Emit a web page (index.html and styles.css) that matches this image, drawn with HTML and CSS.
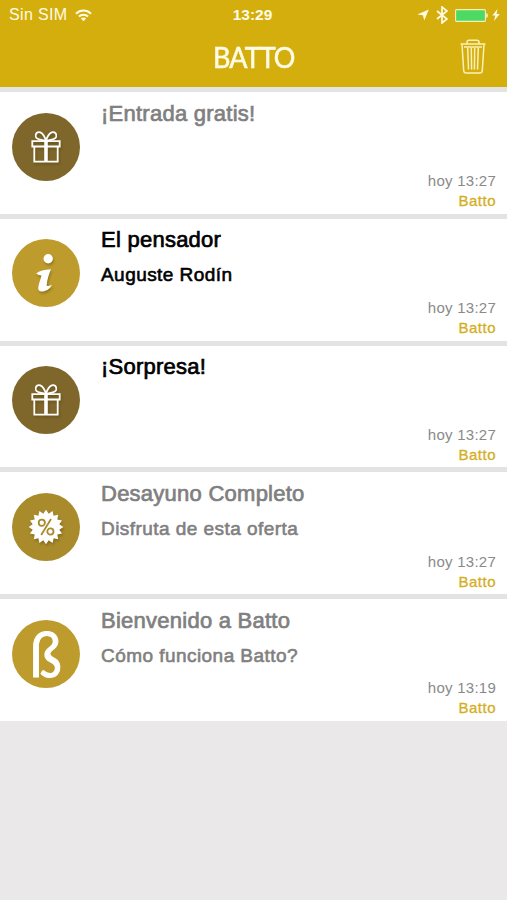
FILE: index.html
```html
<!DOCTYPE html>
<html lang="es">
<head>
    <meta charset="UTF-8">
    <meta name="viewport" content="width=device-width, initial-scale=1.0">
    <title>Batto</title>
    <link rel="stylesheet" href="styles.css">
</head>
<body>
    <!-- Shared icon for the gift messages -->
    <svg class="sprite" width="0" height="0">
        <symbol id="gift" viewBox="0 0 30 34">
            <g fill="none" stroke="#fff" stroke-width="1.8">
                <path d="M1.3 11.2h27.4v5.300H1.3z"/>
                <path d="M3.3 16.500v15.200h23.4V16.500"/>
                <path d="M15 10.800C12 9.600 6 10.400 4.800 6.700 3.900 3.700 6.500 1.300 9.300 2.300c3.300 1.400 4.800 5.300 5.700 8.500zM15 10.800c3-1.200 9-.4 10.200-4.100.9-3-1.700-5.400-4.500-4.400-3.300 1.400-4.800 5.300-5.700 8.500z"/>
                <path d="M15 11v20.500" stroke-width="3.6"/>
            </g>
        </symbol>
    </svg>

    <header class="header">
        <div class="status-bar">
            <div class="status-left">
                <span>Sin SIM</span>
                <svg width="17" height="13" viewBox="0 0 17 13" fill="none" stroke="#fffbe6" stroke-width="2">
                    <path d="M1 4.7C5.2.5 11.8.5 16 4.7M3.9 7.5c2.6-2.5 6.6-2.5 9.2 0"/>
                    <path d="M5.8 9.5c1.6-1.4 3.8-1.4 5.4 0L8.5 12.2z" fill="#fffbe6" stroke="none"/>
                </svg>
            </div>
            <span class="clock">13:29</span>
            <div class="status-right">
                <svg width="12" height="12" viewBox="0 0 12 12" fill="#fffbe6"><path d="M11.8.5L7.2 11.5 6 6.2.3 5.4z"/></svg>
                <svg class="bluetooth" width="12" height="18" viewBox="0 0 12 18" fill="none" stroke="#fffbe6" stroke-width="1.7"><path d="M1 5l10 8-5 4V1l5 4-10 8"/></svg>
                <svg class="battery" width="34" height="13" viewBox="0 0 34 13">
                    <rect x=".6" y=".6" width="29.8" height="11.8" rx="1" fill="#4cd964" stroke="#f8efb5" stroke-width="1.1"/>
                    <path d="M31.3 4c2 .5 2 4.500 0 5z" fill="#fffbe6"/>
                </svg>
                <svg width="8" height="12" viewBox="0 0 8 12" fill="#fffbe6"><path d="M5.5 0L.3 6.6h3L2 12l5.8-7H4.6z"/></svg>
            </div>
        </div>
        <div class="nav-bar">
            <h1>BATTO</h1>
            <svg class="trash" width="26" height="36" viewBox="0 0 26 36" fill="none" stroke="#fbf1b8" stroke-width="1.5">
                <path d="M.5 5h25M7 5V3.2C7 2 8 1.2 9 1.2h8c1.2 0 2 .8 2 2V5"/>
                <path d="M2 5.5l1.7 26c.1 1.7 1 2.6 2.6 2.6h13.4c1.6 0 2.5-.9 2.6-2.6L24 5.5"/>
                <path d="M4 8h18M7.700 9l.8 21.500M11.300 9l.3 21.500M14.700 9l-.3 21.500M18.300 9l-.8 21.500"/>
            </svg>
        </div>
    </header>

    <main>
        <article class="message read">
            <div class="badge brown">
                <svg width="30" height="34"><use href="#gift"/></svg>
            </div>
            <div class="content">
                <h2>¡Entrada gratis!</h2>
            </div>
            <div class="meta">
                <span>hoy 13:27</span>
                <span class="sender">Batto</span>
            </div>
        </article>

        <article class="message">
            <div class="badge gold">
                <svg width="20" height="40" viewBox="0 0 20 40" fill="#fff">
                    <circle cx="12.2" cy="5.7" r="4.7"/>
                    <path d="M.2 20.500c3-2.600 8-4 14.800-4.200-2 4.500-3.800 10.500-4.300 15.300-.2 1.800.8 2.200 5 .1-.6 3-4.700 6.200-8.900 6.700-3.400.3-5-1.200-4.500-4.200.7-4.300 2.400-8.100 3.200-11.600-1.600-.4-3.800-.8-5.300-2.100z"/>
                </svg>
            </div>
            <div class="content">
                <h2>El pensador</h2>
                <p>Auguste Rodín</p>
            </div>
            <div class="meta">
                <span>hoy 13:27</span>
                <span class="sender">Batto</span>
            </div>
        </article>

        <article class="message">
            <div class="badge brown">
                <svg width="30" height="34"><use href="#gift"/></svg>
            </div>
            <div class="content">
                <h2>¡Sorpresa!</h2>
            </div>
            <div class="meta">
                <span>hoy 13:27</span>
                <span class="sender">Batto</span>
            </div>
        </article>

        <article class="message read">
            <div class="badge bronze">
                <svg width="36" height="36" viewBox="-18 -18 36 36">
                    <polygon fill="#fff" points="17.3,0 13.3,2.7 16,6.6 11.3,7.6 12.2,12.2 7.6,11.3 6.6,16 2.7,13.3 0,17.3 -2.7,13.3 -6.6,16 -7.6,11.3 -12.2,12.2 -11.3,7.6 -16,6.6 -13.3,2.7 -17.3,0 -13.3,-2.7 -16,-6.6 -11.3,-7.6 -12.2,-12.2 -7.6,-11.3 -6.6,-16 -2.7,-13.3 0,-17.3 2.7,-13.3 6.6,-16 7.6,-11.3 12.2,-12.2 11.3,-7.6 16,-6.6 13.3,-2.7"/>
                    <g fill="none" stroke="#a98b2b" stroke-width="1.8">
                        <circle cx="-4.2" cy="-4.300" r="3.1"/>
                        <circle cx="4.4" cy="4.500" r="3.1"/>
                        <path d="M5-8L-4.800 8"/>
                    </g>
                </svg>
            </div>
            <div class="content">
                <h2>Desayuno Completo</h2>
                <p>Disfruta de esta oferta</p>
            </div>
            <div class="meta">
                <span>hoy 13:27</span>
                <span class="sender">Batto</span>
            </div>
        </article>

        <article class="message read">
            <div class="badge gold">
                <span class="brand-letter">ß</span>
            </div>
            <div class="content">
                <h2>Bienvenido a Batto</h2>
                <p>Cómo funciona Batto?</p>
            </div>
            <div class="meta">
                <span>hoy 13:19</span>
                <span class="sender">Batto</span>
            </div>
        </article>
    </main>
</body>
</html>
```
FILE: styles.css
```css
* {
    box-sizing: border-box;
}
body {
    margin: 0;
    min-height: 900px;
    background-color: #ebe8ea;
    font-family: "Liberation Sans", Arial, sans-serif;
    color: #000;
}
.sprite {
    display: block;
}
.header {
    height: 87.2px;
    background-color: #d4ae0c;
    color: #fffbe6;
}
.status-bar {
    display: grid;
    grid-template-columns: 1fr auto 1fr;
    align-items: center;
    height: 30px;
    padding: 0 7px 0 9px;
    font-size: 16px;
}
.status-left {
    display: flex;
    align-items: center;
    gap: 8px;
    letter-spacing: 0.35px;
}
.clock {
    margin-right: 4px;
    font-size: 15.5px;
    font-weight: bold;
}
.status-right {
    display: flex;
    align-items: center;
    justify-content: flex-end;
}
.bluetooth {
    margin-left: 7px;
}
.battery {
    margin: 0 3px 0 7px;
}
.nav-bar {
    display: grid;
    grid-template-columns: 1fr auto 1fr;
    align-items: center;
    height: 54px;
    padding: 0 21px;
}
.nav-bar h1 {
    grid-column: 2;
    margin: 0;
    font-family: Lato, sans-serif;
    font-size: 29px;
    font-weight: 400;
    line-height: 32px;
    letter-spacing: -1px;
    transform: scaleX(0.93);
    -webkit-text-stroke: 0.6px #fffbe6;
}
.trash {
    justify-self: end;
}
.message {
    display: flex;
    height: 126.75px;
    padding: 0 11px 0 11.5px;
    border-top: 5px solid #e3e3e4;
    background-color: #fff;
}
.badge {
    display: flex;
    justify-content: center;
    align-items: center;
    flex: none;
    width: 68px;
    height: 68px;
    margin-top: 20.5px;
    border-radius: 50%;
}
.badge svg {
    filter: drop-shadow(1px 2px 1px rgba(60, 40, 0, 0.3));
}
.brown {
    background-color: #7f672b;
}
.gold {
    background-color: #bd9b2d;
}
.bronze {
    background-color: #a98b2b;
}
.brand-letter {
    color: #fff;
    font-family: Lato, sans-serif;
    font-size: 61px;
    line-height: 68px;
    transform: scaleX(0.9);
    -webkit-text-stroke: 1px #fff;
}
.content {
    flex: 1;
    padding: 8.5px 0 0 21.5px;
    white-space: nowrap;
}
.content h2 {
    margin: 0;
    font-size: 22px;
    font-weight: normal;
    line-height: 26px;
    letter-spacing: 0.25px;
    -webkit-text-stroke: 0.7px currentColor;
}
.content p {
    margin: 10px 0 0;
    font-size: 19px;
    line-height: 24px;
    letter-spacing: 0.45px;
    -webkit-text-stroke: 0.6px currentColor;
}
.read .content {
    color: #808080;
}
.meta {
    display: flex;
    flex-direction: column;
    align-items: flex-end;
    justify-content: flex-end;
    padding-bottom: 2.5px;
    color: #8a8a8a;
    font-size: 15px;
    line-height: 20px;
    letter-spacing: 0.25px;
}
.sender {
    color: #d4ae1c;
    letter-spacing: 0.5px;
    -webkit-text-stroke: 0.3px currentColor;
}
```
